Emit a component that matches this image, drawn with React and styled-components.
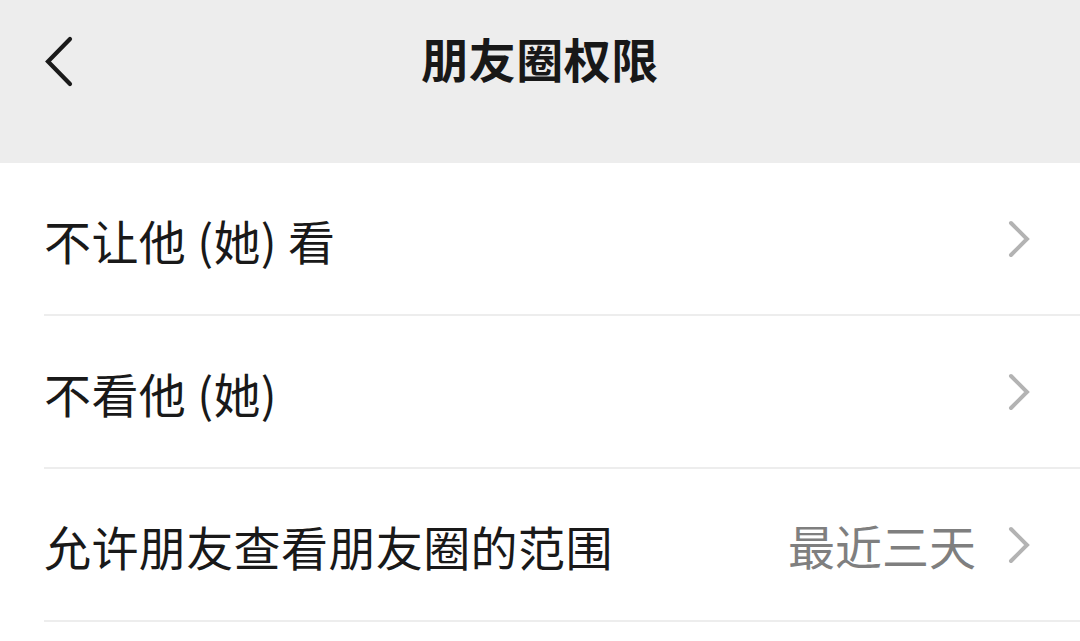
import React from "react";
import styled, { createGlobalStyle } from "styled-components";

const Global = createGlobalStyle`
  html, body { margin: 0; padding: 0; background: #ffffff; }
  body { font-family: "Noto Sans CJK SC", "Noto Sans", sans-serif; }
  * { box-sizing: border-box; }
`;

const Page = styled.div`
  width: 1080px;
  height: 641px;
  overflow: hidden;
  background: #ffffff;
  display: flex;
  flex-direction: column;
`;

const Header = styled.header`
  height: 163px;
  flex: none;
  background: #ededed;
  display: grid;
  grid-template-columns: 200px 1fr 200px;
  align-items: start;
  padding-top: 36px;
`;

const BackButton = styled.button`
  border: none;
  background: none;
  padding: 0 0 0 45px;
  margin: 0;
  display: flex;
  align-items: center;
  justify-content: flex-start;
  height: 51px;
  cursor: pointer;
`;

const Title = styled.h1`
  margin: 0;
  text-align: center;
  font-size: 47px;
  font-weight: 700;
  color: #181818;
  line-height: 43px;
  letter-spacing: 0.5px;
`;

const List = styled.div`
  display: flex;
  flex-direction: column;
`;

const Row = styled.div`
  height: 153px;
  margin-left: 44px;
  padding-right: 48px;
  border-bottom: 2px solid #ededed;
  display: flex;
  align-items: center;
  justify-content: space-between;
`;

const Label = styled.span`
  font-size: 47px;
  color: #191919;
  line-height: 1;
  margin-top: 2px;
  letter-spacing: 0.4px;
`;

const Right = styled.div`
  display: flex;
  align-items: center;
  gap: 32px;
`;

const Value = styled.span`
  font-size: 47px;
  color: #7f7f7f;
  line-height: 1;
`;

const BackIcon = () => (
  <svg width="30" height="51" viewBox="0 0 30 51">
    <polyline
      points="25,3 3,25.5 25,48"
      fill="none"
      stroke="#1a1a1a"
      strokeWidth="4.2"
      strokeLinecap="round"
      strokeLinejoin="miter"
    />
  </svg>
);

const Chevron = () => (
  <svg width="24" height="38" viewBox="0 0 24 38">
    <polyline
      points="3,3 19,19 3,35"
      fill="none"
      stroke="#b3b3b3"
      strokeWidth="4"
      strokeLinecap="round"
      strokeLinejoin="miter"
    />
  </svg>
);

const items = [
  { label: "不让他 (她) 看" },
  { label: "不看他 (她)" },
  { label: "允许朋友查看朋友圈的范围", value: "最近三天" },
];

export default function App() {
  return (
    <Page>
      <Global />
      <Header>
        <BackButton aria-label="返回">
          <BackIcon />
        </BackButton>
        <Title>朋友圈权限</Title>
        <div />
      </Header>
      <List>
        {items.map((it) => (
          <Row key={it.label}>
            <Label>{it.label}</Label>
            <Right>
              {it.value && <Value>{it.value}</Value>}
              <Chevron />
            </Right>
          </Row>
        ))}
      </List>
    </Page>
  );
}
